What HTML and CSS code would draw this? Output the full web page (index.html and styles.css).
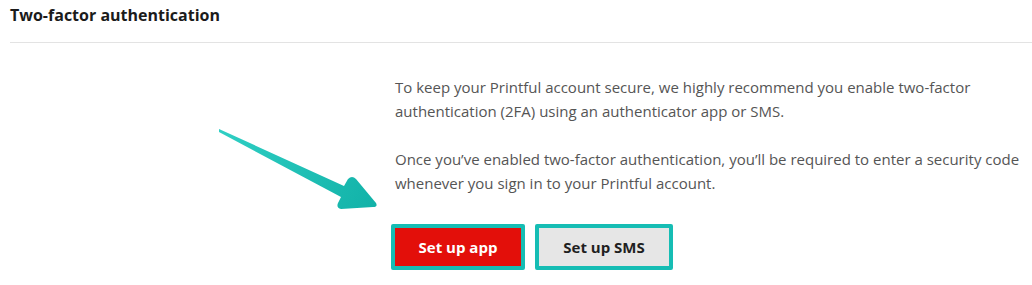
FILE: index.html
```html
<!DOCTYPE html>
<html>
<head>
<meta charset="utf-8">
<link rel="stylesheet" href="styles.css">
</head>
<body>
<div class="page">
  <h2 class="title">Two-factor authentication</h2>
  <div class="content">
    <p class="text">To keep your Printful account secure, we highly recommend you enable two-factor authentication (2FA) using an authenticator app or SMS.</p>
    <p class="text">Once you’ve enabled two-factor authentication, you’ll be required to enter a security code whenever you sign in to your Printful account.</p>
    <div class="actions">
      <button class="btn btn-primary">Set up app</button>
      <button class="btn btn-secondary">Set up SMS</button>
    </div>
  </div>
  <svg class="arrow" width="1032" height="285" viewBox="0 0 1032 285">
    <defs>
      <linearGradient id="g" x1="219" y1="130" x2="376" y2="206" gradientUnits="userSpaceOnUse">
        <stop offset="0" stop-color="#2fcfc4"/>
        <stop offset="1" stop-color="#12b2a8"/>
      </linearGradient>
    </defs>
    <path d="M219 129 L344 186 L348 179 Q352 175 356 179 L376 203 Q378 207 373 207 L341 209 Q336 208 338 203 L341 197 L219 132 Z" fill="url(#g)"/>
  </svg>
</div>
</body>
</html>
```

FILE: styles.css
```css
* { box-sizing: border-box; }
html, body { margin: 0; padding: 0; background: #fff; }
body { font-family: "Open Sans", "Liberation Sans", sans-serif; }
.page { position: relative; width: 1032px; height: 285px; padding-left: 10px; }
.title {
  margin: 0;
  font-family: "Open Sans", sans-serif;
  font-weight: 700;
  font-size: 16px;
  line-height: 20px;
  padding-top: 5px;
  height: 43px;
  color: #1b1b1b;
  border-bottom: 1px solid #e3e3e3;
}
.content { padding-left: 385px; padding-top: 32px; }
.text {
  margin: 0 0 24px 0;
  width: 634px;
  font-size: 15px;
  line-height: 24px;
  color: #555;
}
.actions { display: flex; gap: 10px; margin-top: 29px; margin-left: -4px; }
.btn {
  font-family: "Open Sans", sans-serif;
  font-weight: 700;
  font-size: 15px;
  height: 46px;
  border: 4px solid #16bdb4;
  border-radius: 2px;
  padding: 0;
  cursor: pointer;
}
.btn-primary { width: 134px; background: #e30f0a; color: #fff; }
.btn-secondary { width: 138px; background: #e6e6e6; color: #1f1f1f; }
.arrow { position: absolute; left: 0; top: 0; pointer-events: none; }
```
